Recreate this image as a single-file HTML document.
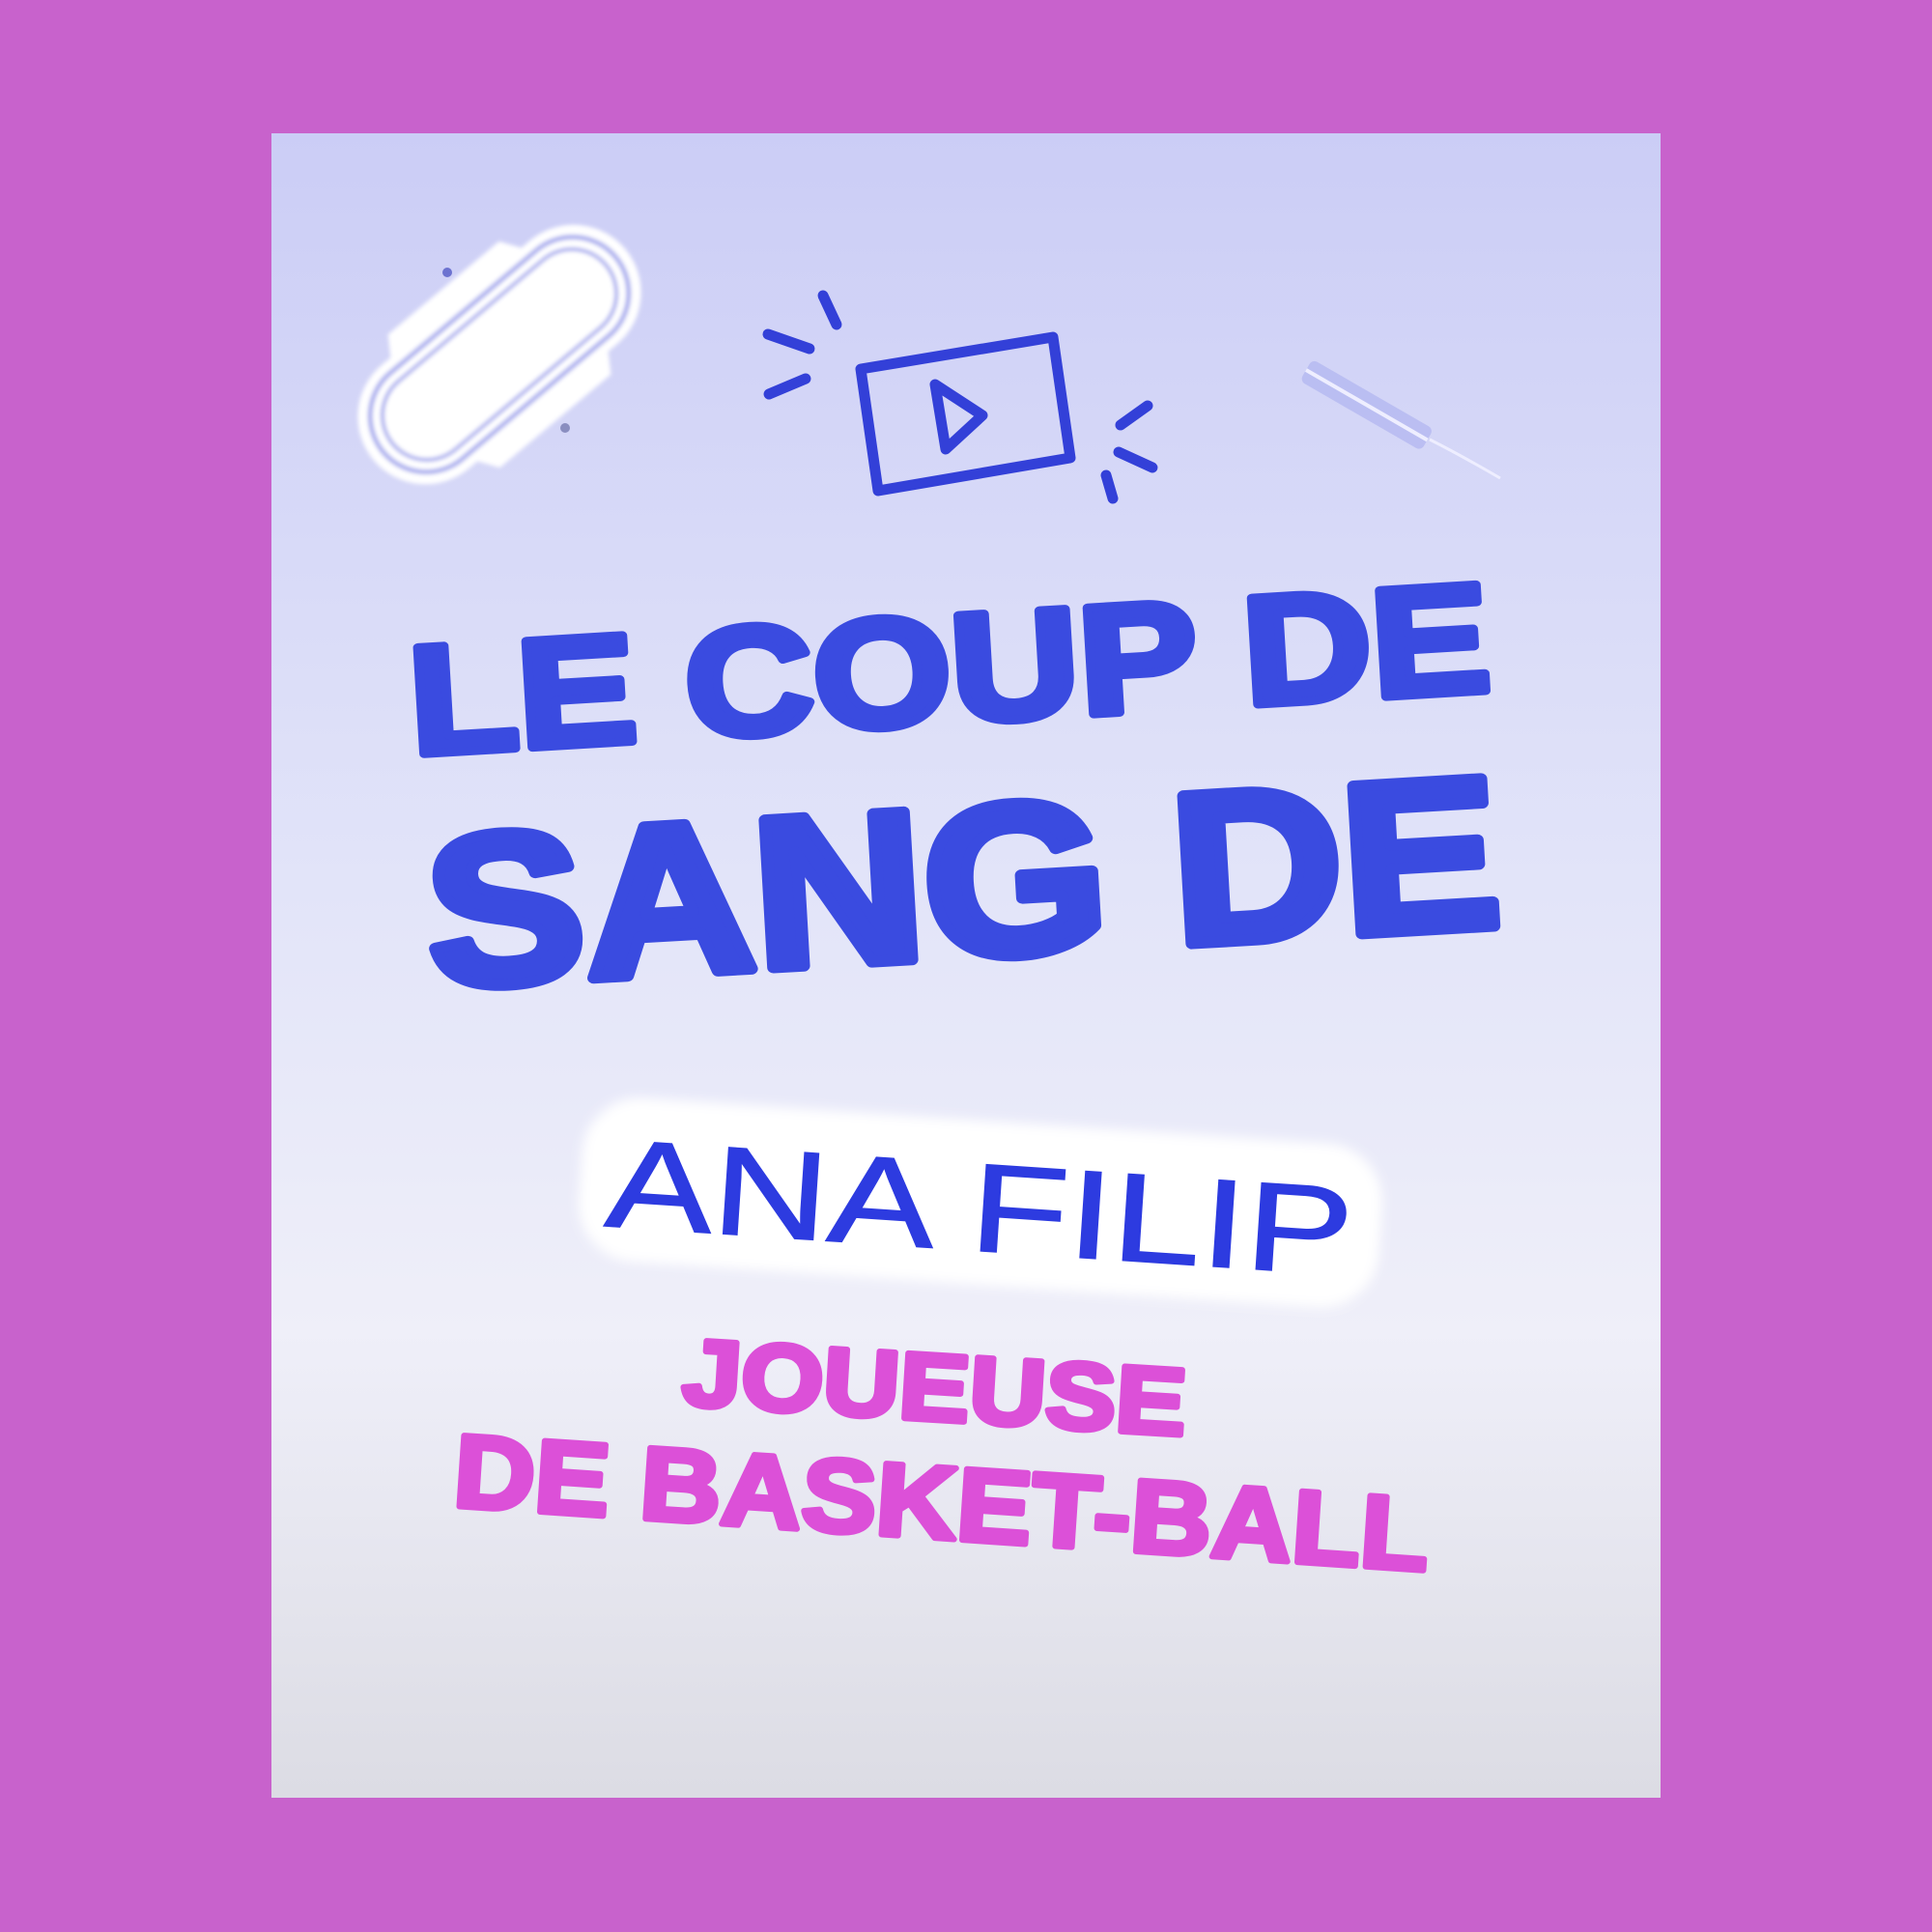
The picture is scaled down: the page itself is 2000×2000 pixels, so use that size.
<!DOCTYPE html>
<html><head><meta charset="utf-8"><style>
html,body{margin:0;padding:0;background:#c862cc;}
svg{display:block;}
</style></head><body>
<svg width="2000" height="2000" viewBox="0 0 2000 2000" xmlns="http://www.w3.org/2000/svg">
<defs>
<linearGradient id="bg" x1="0" y1="0" x2="0" y2="1">
<stop offset="0" stop-color="#cbcdf6"/>
<stop offset="0.45" stop-color="#e2e4f9"/>
<stop offset="0.72" stop-color="#efeff9"/>
<stop offset="1" stop-color="#dcdce4"/>
</linearGradient>
<filter id="blur"><feGaussianBlur stdDeviation="6"/></filter>
<filter id="soft"><feGaussianBlur stdDeviation="2"/></filter>
</defs>
<rect width="2000" height="2000" fill="#c862cc"/>
<rect x="281" y="138" width="1438" height="1723" fill="url(#bg)"/>

<!-- pad -->
<g transform="translate(517,367) rotate(-40)" filter="url(#soft)">
<polygon points="-75,-90 75,-90 105,-45 105,45 75,90 -75,90 -105,45 -105,-45" fill="#fff"/>
<rect x="-170" y="-70" width="340" height="140" rx="70" fill="#fff"/>
<rect x="-157" y="-58" width="314" height="116" rx="58" fill="none" stroke="#a8acee" stroke-width="5"/>
<rect x="-144" y="-46" width="288" height="92" rx="46" fill="none" stroke="#a8acee" stroke-width="4"/>
</g>
<circle cx="463" cy="282" r="5" fill="#6c72d0"/>
<circle cx="585" cy="443" r="5" fill="#8a8ec0"/>

<!-- video box -->
<g fill="none" stroke="#3340d8" stroke-width="11" stroke-linecap="round" stroke-linejoin="round">
<polygon points="891,382 1090,349 1108,474 909,508"/>
<polygon points="968,398 1017,430 979,465"/>
<line x1="852" y1="306" x2="866" y2="336"/>
<line x1="795" y1="346" x2="838" y2="361"/>
<line x1="796" y1="408" x2="834" y2="392"/>
<line x1="1160" y1="440" x2="1188" y2="420"/>
<line x1="1158" y1="468" x2="1193" y2="484"/>
<line x1="1145" y1="492" x2="1152" y2="516"/>
</g>

<!-- tampon -->
<g transform="translate(1352,383) rotate(30)">
<rect x="0" y="-13" width="145" height="26" rx="6" fill="#b4b8f0" opacity="0.8"/>
<line x1="0" y1="0" x2="145" y2="0" stroke="#eef" stroke-width="4"/>
</g>
<path d="M1480,455 Q1510,470 1553,495" stroke="#eef" stroke-width="3" fill="none"/>

<g font-family="Liberation Sans, sans-serif" font-weight="bold" fill="#3a4be0" stroke="#3a4be0" stroke-linejoin="round">
<text transform="translate(427,781) rotate(-3.4)" font-size="160" stroke-width="9" textLength="1120" lengthAdjust="spacingAndGlyphs">LE COUP DE</text>
<text transform="translate(446,1022) rotate(-3.3)" font-size="222" stroke-width="12" textLength="1112" lengthAdjust="spacingAndGlyphs">SANG DE</text>
</g>

<!-- white blob -->
<g transform="rotate(3.8 1014 1244)">
<rect x="600" y="1160" width="830" height="170" rx="60" fill="#fff" filter="url(#blur)"/>
</g>
<text transform="translate(625,1269) rotate(3.8)" font-family="Liberation Sans, sans-serif" font-size="130" fill="#2d3be0" stroke="#2d3be0" stroke-width="1.5" textLength="774" lengthAdjust="spacingAndGlyphs">ANA FILIP</text>

<g font-family="Liberation Sans, sans-serif" font-weight="bold" fill="#dc50d8" stroke="#dc50d8" stroke-linejoin="round" stroke-width="6">
<text transform="translate(705,1454) rotate(3.5)" font-size="98" textLength="522" lengthAdjust="spacingAndGlyphs">JOUEUSE</text>
<text transform="translate(468,1559) rotate(3.8)" font-size="107" textLength="1011" lengthAdjust="spacingAndGlyphs">DE BASKET-BALL</text>
</g>
</svg>
</body></html>
